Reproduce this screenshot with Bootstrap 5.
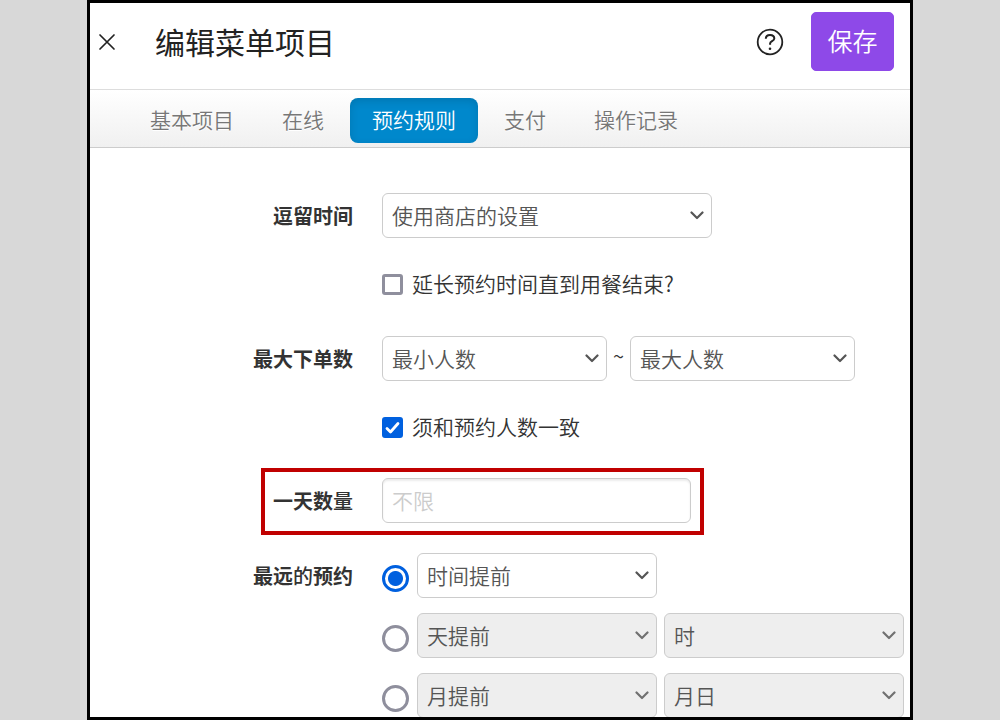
<!DOCTYPE html>
<html lang="zh-CN">
<head>
<meta charset="utf-8">
<meta name="viewport" content="width=device-width, initial-scale=1">
<title>编辑菜单项目</title>
<link href="https://cdn.jsdelivr.net/npm/bootstrap@5.3.0/dist/css/bootstrap.min.css" rel="stylesheet">
<style>
  body { background: #d8d8d8; color: #333; font-family: "Noto Sans CJK SC", sans-serif; font-size: 21px; font-weight: 350; line-height: 31px; }
  .panel { max-width: 826px; border: 3px solid #000; background: #fff; }

  .panel-head { height: 86px; padding: 0 16px 10px 8px; }
  .panel-head h1 { font-size: 30px; line-height: 40px; font-weight: 400; margin-left: 39px; color: #222; }
  .icon-btn { border: 0; background: none; padding: 2px 0 0; color: #222; line-height: 0; }
  .btn-save { --bs-btn-color: #fff; --bs-btn-bg: #8e49e8; --bs-btn-border-color: #8e49e8; --bs-btn-hover-color: #fff; --bs-btn-hover-bg: #7c38d6;
    --bs-btn-border-radius: 5px; width: 83px; height: 59px; margin-left: 27px; padding: 0; font-size: 25px; font-weight: 350; }

  .tabs { height: 59px; gap: 4px; padding: 3px 38px 0 38px; border-top: 1px solid #ddd; border-bottom: 1px solid #ccc; background: linear-gradient(#fff, #f0f0f0); }
  .tabs .nav-link { height: 45px; padding: 6px 22px; border-radius: 8px; color: #777; text-shadow: 0 1px 0 #fff; }
  .tabs .nav-link.active { background: #08c; color: #fff; text-shadow: none; box-shadow: inset 0 3px 8px rgba(0, 0, 0, .125); }

  .form-body { padding-top: 45px; }
  .field { display: grid; grid-template-columns: 263px 1fr; column-gap: 29px; margin-bottom: 36px; }
  .field-name { text-align: right; font-size: 20px; font-weight: 700; line-height: 45px; }
  .field-name span { font-weight: 500; }
  .form-select, .form-control { height: 45px; border: 1px solid #ccc; border-radius: 6px; padding: 0 9px; font-size: 21px; font-weight: 350; line-height: 31px; color: #555; }
  .form-select { background: #fff url("data:image/svg+xml,%3Csvg xmlns='http://www.w3.org/2000/svg' viewBox='0 0 14 9'%3E%3Cpath d='M1.5 1.5 7 7l5.5-5.5' fill='none' stroke='%23555' stroke-width='2.2' stroke-linecap='round' stroke-linejoin='round'/%3E%3C/svg%3E") no-repeat right 7px center / 14px 9px; }
  .form-select:disabled { background-color: #eee; color: #555; opacity: 1;
    background-image: url("data:image/svg+xml,%3Csvg xmlns='http://www.w3.org/2000/svg' viewBox='0 0 14 9'%3E%3Cpath d='M1.5 1.5 7 7l5.5-5.5' fill='none' stroke='%23707070' stroke-width='2.2' stroke-linecap='round' stroke-linejoin='round'/%3E%3C/svg%3E"); }
  .form-control { box-shadow: inset 0 2px 2px rgba(0, 0, 0, .075); padding-bottom: 2px; }
  .form-control::placeholder { color: #ccc; }
  .w-wide { width: 330px; }
  .w-text { width: 309px; }
  .w-range { width: 225px; }
  .w-unit { width: 240px; }
  .unit-row { column-gap: 7px; }

  .tick-row { gap: 9px; margin-top: 31px; height: 31px; }
  .tick-row label { padding-bottom: 3px; }
  .form-check-input { flex: none; margin: 0; border: 3px solid #8f8f9d; background-color: #fff; }
  .form-check-input[type=checkbox] { width: 21px; height: 21px; border-radius: 3px; }
  .form-check-input[type=checkbox]:checked { border-color: #0060df; background: #0060df url("data:image/svg+xml,%3Csvg xmlns='http://www.w3.org/2000/svg' viewBox='0 0 21 21'%3E%3Cpath d='M5 11.5 8.5 15 16 6.5' fill='none' stroke='%23fff' stroke-width='2.8' stroke-linecap='round' stroke-linejoin='round'/%3E%3C/svg%3E") center / 21px 21px border-box; }
  .form-check-input[type=radio] { width: 27px; height: 27px; margin: 6px 1px 0 0; }
  .form-check-input[type=radio]:checked { border-color: #0060df; background: #fff radial-gradient(circle, #0060df 7px, #fff 8px); }
  .tilde { width: 23px; text-align: center; font-size: 20px; }

  .field-tight { margin: -1px 0 30px; }
  .highlight { inset: -10px auto -12px 171px; width: 443px; border: 4px solid #c00000; pointer-events: none; }
</style>
</head>
<body>
<main class="panel mx-auto vh-100 overflow-hidden d-flex flex-column">
  <header class="panel-head d-flex align-items-center flex-shrink-0">
    <button type="button" class="icon-btn" aria-label="关闭">
      <svg width="18" height="18" viewBox="0 0 18 18" fill="none" stroke="currentColor" stroke-width="1.7" stroke-linecap="round"><path d="M2 2l14 14M16 2 2 16"/></svg>
    </button>
    <h1 class="mb-0">编辑菜单项目</h1>
    <button type="button" class="icon-btn ms-auto" aria-label="帮助">
      <svg width="28" height="28" viewBox="0 0 28 28" fill="none" stroke="currentColor"><circle cx="14" cy="14" r="12.3" stroke-width="1.8"/><path d="M9.8 10.8c0-2.5 1.8-3.9 4.2-3.9s4.3 1.4 4.3 3.5c0 2.6-4.2 2.9-4.2 5.1v1.2" stroke-width="2"/><circle cx="14" cy="20.8" r="1.3" fill="currentColor" stroke="none"/></svg>
    </button>
    <button type="submit" form="rules" class="btn btn-save">保存</button>
  </header>

  <nav class="tabs nav nav-pills align-items-center flex-nowrap flex-shrink-0">
    <a class="nav-link" href="#basic">基本项目</a>
    <a class="nav-link" href="#online">在线</a>
    <a class="nav-link active" aria-current="page" href="#rules">预约规则</a>
    <a class="nav-link" href="#payment">支付</a>
    <a class="nav-link" href="#log">操作记录</a>
  </nav>

  <form id="rules" class="form-body">
    <div class="field">
      <label class="field-name" for="stay">逗留时间</label>
      <div>
        <select id="stay" class="form-select w-wide"><option>使用商店的设置</option></select>
        <div class="tick-row d-flex align-items-center">
          <input class="form-check-input" type="checkbox" id="extend">
          <label for="extend">延长预约时间直到用餐结束?</label>
        </div>
      </div>
    </div>

    <div class="field">
      <label class="field-name" for="min">最大下单数</label>
      <div>
        <div class="d-flex">
          <select id="min" class="form-select w-range"><option>最小人数</option></select>
          <span class="tilde pt-1">~</span>
          <select class="form-select w-range" aria-label="最大人数"><option>最大人数</option></select>
        </div>
        <div class="tick-row d-flex align-items-center">
          <input class="form-check-input" type="checkbox" id="same" checked>
          <label for="same">须和预约人数一致</label>
        </div>
      </div>
    </div>

    <div class="field field-tight position-relative">
      <label class="field-name" for="daily">一天数<span>量</span></label>
      <div><input id="daily" type="text" class="form-control w-text" placeholder="不限"></div>
      <div class="highlight position-absolute"></div>
    </div>

    <div class="field" role="radiogroup" aria-labelledby="far">
      <div class="field-name" id="far">最远<span>的</span>预约</div>
      <div class="d-grid" style="row-gap: 15px">
        <div class="unit-row d-flex align-items-center">
          <input class="form-check-input" type="radio" name="far" aria-label="时间提前" checked>
          <select class="form-select w-unit" aria-label="时间提前"><option>时间提前</option></select>
        </div>
        <div class="unit-row d-flex align-items-center">
          <input class="form-check-input" type="radio" name="far" aria-label="天提前">
          <select class="form-select w-unit" aria-label="天提前" disabled><option>天提前</option></select>
          <select class="form-select w-unit" aria-label="时" disabled><option>时</option></select>
        </div>
        <div class="unit-row d-flex align-items-center">
          <input class="form-check-input" type="radio" name="far" aria-label="月提前">
          <select class="form-select w-unit" aria-label="月提前" disabled><option>月提前</option></select>
          <select class="form-select w-unit" aria-label="月日" disabled><option>月日</option></select>
        </div>
      </div>
    </div>
  </form>
</main>
<script src="https://cdn.jsdelivr.net/npm/bootstrap@5.3.0/dist/js/bootstrap.bundle.min.js"></script>
</body>
</html>
